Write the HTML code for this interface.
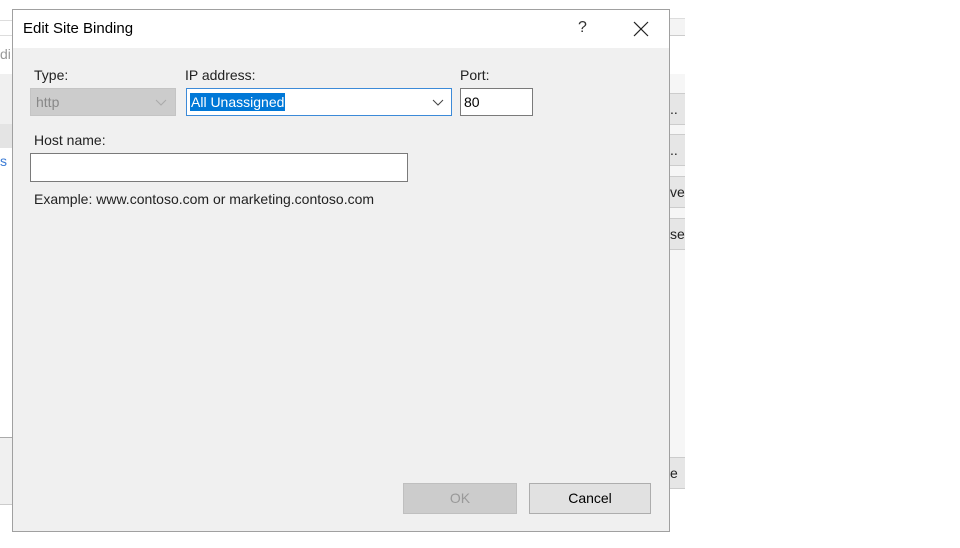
<!DOCTYPE html>
<html><head><meta charset="utf-8"><style>
*{box-sizing:border-box;margin:0;padding:0}
body{width:960px;height:548px;background:#fff;position:relative;overflow:hidden;font-family:"Liberation Sans",sans-serif;font-size:14px;color:#000}
.a{position:absolute}
.dlg{left:12px;top:9px;width:658px;height:523px;border:1px solid #a0a0a0;background:#f0f0f0}
.tb{left:0;top:0;width:656px;height:38px;background:#fff}
.lbl{font-size:14px;color:#222}
.bgbtn{background:#e6e6e6;border-top:1px solid #ccc;border-bottom:1px solid #ccc;height:32px;left:670px;width:15px;font-size:14px;line-height:30px;overflow:hidden;color:#222}
</style></head><body>
<!-- background window bits -->
<div class="a" style="left:0;top:20px;width:12px;height:16px;border-top:1px solid #ddd;border-bottom:1px solid #ddd"></div>
<div class="a" style="left:0;top:46px;font-size:14px;color:#999">di</div>
<div class="a" style="left:0;top:74px;width:12px;height:74px;background:#f0f0f0"></div>
<div class="a" style="left:0;top:124px;width:12px;height:24px;background:#e4e4e4"></div>
<div class="a" style="left:0;top:153px;color:#3a7bd5">s</div>
<div class="a" style="left:0;top:437px;width:12px;height:68px;background:#f0f0f0;border-top:1px solid #aaa;border-bottom:1px solid #ccc"></div>
<div class="a" style="left:670px;top:18px;width:15px;height:18px;background:#f4f4f4;border-top:1px solid #ddd;border-bottom:1px solid #ccc"></div>
<div class="a" style="left:670px;top:74px;width:15px;height:400px;background:#f6f6f6"></div>
<div class="a bgbtn" style="top:93px">..</div>
<div class="a bgbtn" style="top:134px">..</div>
<div class="a bgbtn" style="top:176px">ve</div>
<div class="a bgbtn" style="top:218px">se</div>
<div class="a bgbtn" style="top:457px;height:32px">e</div>

<div class="a dlg">
 <div class="a tb">
  <div class="a" style="left:10px;top:10px;font-size:15px">Edit Site Binding</div>
  <div class="a" style="left:565px;top:9px;font-size:16px;color:#333">?</div>
  <svg class="a" style="left:620px;top:11px" width="16" height="16"><path d="M1 1L15 15M15 1L1 15" stroke="#222" stroke-width="1.2"/></svg>
 </div>
 <div class="a lbl" style="left:21px;top:57px">Type:</div>
 <div class="a lbl" style="left:172px;top:57px">IP address:</div>
 <div class="a lbl" style="left:447px;top:57px">Port:</div>
 <div class="a" style="left:17px;top:78px;width:146px;height:28px;background:#ccc;border:1px solid #c4c4c4">
  <div class="a" style="left:5px;top:5px;color:#888">http</div>
  <svg class="a" style="left:124px;top:8px" width="12" height="10"><path d="M1 3L6 8L11 3" stroke="#aaa" fill="none"/></svg>
 </div>
 <div class="a" style="left:173px;top:78px;width:266px;height:28px;background:#fff;border:1px solid #3c8ad8">
  <div class="a" style="left:3px;top:4px;background:#0078d7;color:#fff;padding:0 1px;line-height:18px">All Unassigned</div>
  <svg class="a" style="left:245px;top:8px" width="12" height="10"><path d="M1 3L6 8L11 3" stroke="#444" fill="none"/></svg>
 </div>
 <div class="a" style="left:447px;top:78px;width:73px;height:28px;background:#fff;border:1px solid #7a7a7a">
  <div class="a" style="left:3px;top:5px">80</div>
 </div>
 <div class="a lbl" style="left:21px;top:122px">Host name:</div>
 <div class="a" style="left:17px;top:143px;width:378px;height:29px;background:#fff;border:1px solid #7a7a7a"></div>
 <div class="a lbl" style="left:21px;top:181px">Example: www.contoso.com or marketing.contoso.com</div>
 <div class="a" style="left:390px;top:473px;width:114px;height:31px;background:#ccc;border:1px solid #bfbfbf;color:#999;text-align:center;line-height:29px">OK</div>
 <div class="a" style="left:516px;top:473px;width:122px;height:31px;background:#e1e1e1;border:1px solid #adadad;text-align:center;line-height:29px">Cancel</div>
</div>
</body></html>
